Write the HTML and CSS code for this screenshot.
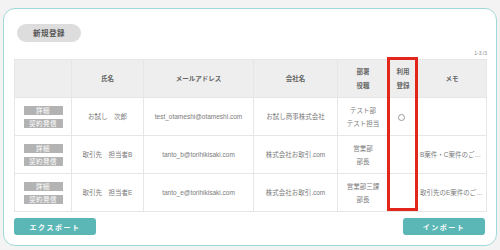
FILE: index.html
```html
<!DOCTYPE html>
<html lang="ja">
<head>
<meta charset="utf-8">
<link rel="stylesheet" href="styles.css">
</head>
<body>
<div class="card">
  <div class="top"><button class="btn-new">新規登録</button></div>
  <div class="count">1-3 /3</div>
  <div class="table-wrap">
    <table class="list">
      <colgroup>
        <col class="c1"><col class="c2"><col class="c3"><col class="c4"><col class="c5"><col class="c6"><col class="c7">
      </colgroup>
      <thead>
        <tr><th></th><th>氏名</th><th>メールアドレス</th><th>会社名</th><th>部署<br>役職</th><th>利用<br>登録</th><th>メモ</th></tr>
      </thead>
      <tbody>
        <tr>
          <td><div class="acts"><span class="tag">詳細</span><span class="tag">契約発信</span></div></td>
          <td>お試し　次郎</td>
          <td>test_otameshi@otameshi.com</td>
          <td>お試し商事株式会社</td>
          <td>テスト部<br>テスト担当</td>
          <td><span class="circle" aria-label="○"></span></td>
          <td class="memo"></td>
        </tr>
        <tr>
          <td><div class="acts"><span class="tag">詳細</span><span class="tag">契約発信</span></div></td>
          <td>取引先　担当者B</td>
          <td>tanto_b@torihikisaki.com</td>
          <td>株式会社お取引.com</td>
          <td>営業部<br>部長</td>
          <td></td>
          <td class="memo">B案件・C案件のご…</td>
        </tr>
        <tr>
          <td><div class="acts"><span class="tag">詳細</span><span class="tag">契約発信</span></div></td>
          <td>取引先　担当者E</td>
          <td>tanto_e@torihikisaki.com</td>
          <td>株式会社お取引.com</td>
          <td>営業部三課<br>部長</td>
          <td></td>
          <td class="memo">取引先のE案件のご…</td>
        </tr>
      </tbody>
    </table>
    <div class="highlight"></div>
  </div>
  <div class="bottom">
    <button class="btn-teal">エクスポート</button>
    <button class="btn-teal">インポート</button>
  </div>
</div>
</body>
</html>
```

FILE: styles.css
```css
* { box-sizing: border-box; }
html, body { margin: 0; padding: 0; }
body {
  width: 500px;
  height: 250px;
  background: #f3f3f3;
  font-family: "Liberation Sans", "Noto Sans CJK JP", sans-serif;
  padding: 8px 3px 0 3px;
}
.card {
  width: 494px;
  height: 238px;
  background: #fff;
  border: 1px solid #9fd8d6;
  border-radius: 12px;
  padding: 13px 10px 0 10px;
  display: flex;
  flex-direction: column;
}
.top { height: 18px; padding-left: 3px; }
.btn-new {
  width: 64px;
  height: 18px;
  border: none;
  border-radius: 9px;
  background: #dddddd;
  color: #555;
  font-family: inherit;
  font-size: 7.5px;
  font-weight: bold;
  letter-spacing: 0.5px;
  padding: 0;
}
.count {
  text-align: right;
  font-size: 5px;
  color: #888;
  height: 19px;
  line-height: 6px;
  padding-top: 10px;
  margin-right: -1px;
}
.table-wrap { position: relative; width: 472px; }
.list {
  width: 472px;
  table-layout: fixed;
  border-collapse: collapse;
}
.c1 { width: 57px; }
.c2 { width: 72px; }
.c3 { width: 110px; }
.c4 { width: 84px; }
.c5 { width: 51px; }
.c6 { width: 29px; }
.c7 { width: 69px; }
.list th, .list td {
  border: 1px solid #e6e6e6;
  height: 38px;
  padding: 0;
  text-align: center;
  vertical-align: middle;
  font-size: 6.5px;
  line-height: 13px;
  white-space: nowrap;
  overflow: hidden;
}
.list th {
  background: #eeeeee;
  color: #666;
  font-weight: bold;
  line-height: 14px;
}
.list td { color: #7a7a7a; }
.acts {
  display: flex;
  flex-direction: column;
  align-items: center;
  gap: 4px;
}
.tag {
  width: 39px;
  height: 9px;
  background: #b3b3b3;
  color: #fff;
  font-size: 6.5px;
  line-height: 9px;
  text-align: center;
  letter-spacing: 0.5px;
}
.circle {
  display: inline-block;
  width: 7px;
  height: 7px;
  border: 1px solid #999;
  border-radius: 50%;
  vertical-align: middle;
  margin-left: -3px;
}
.list td.memo { text-align: left; padding-left: 2px; }
.highlight {
  position: absolute;
  left: 373px;
  top: -2px;
  width: 31px;
  height: 154px;
  border: 3px solid #e3261b;
}
.bottom {
  display: flex;
  justify-content: space-between;
  margin-top: 6px;
  padding-right: 1px;
}
.btn-teal {
  width: 82px;
  height: 17px;
  border: none;
  border-radius: 3px;
  background: #5bb7b6;
  color: #fff;
  font-family: inherit;
  font-size: 7px;
  font-weight: bold;
  letter-spacing: 1.5px;
  padding: 0;
}
```
